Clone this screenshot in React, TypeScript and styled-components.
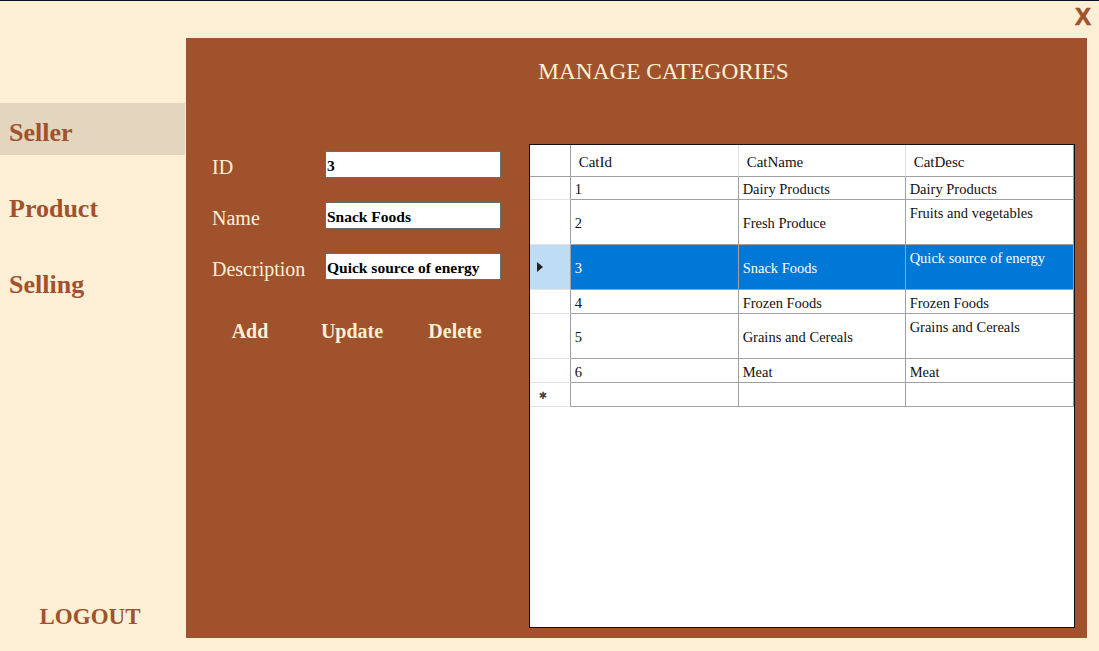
import React from "react";
import styled, { createGlobalStyle } from "styled-components";

const Global = createGlobalStyle`
  html, body { margin: 0; padding: 0; background: #FDEFD6; }
  body { font-family: "Liberation Serif", "Times New Roman", serif; }
  * { box-sizing: border-box; }
`;

const BROWN = "#A0522D";
const CREAM = "#FDEFD6";

const Page = styled.div`
  width: 1099px;
  height: 651px;
  border-top: 1px solid #0a1020;
  background: ${CREAM};
  display: flex;
  flex-direction: column;
  overflow: hidden;
`;

const TopBar = styled.div`
  height: 37px;
  display: flex;
  justify-content: flex-end;
  align-items: flex-start;
  padding-right: 8px;
`;

const CloseX = styled.div`
  font-family: "Liberation Sans", Arial, sans-serif;
  font-weight: 900;
  font-size: 24px;
  line-height: 24px;
  color: ${BROWN};
  margin-top: 4px;
  -webkit-text-stroke: 0.6px ${BROWN};
  cursor: pointer;
`;

const Body = styled.div`
  display: flex;
  height: 600px;
`;

const Sidebar = styled.nav`
  width: 186px;
  display: flex;
  flex-direction: column;
  padding-top: 65px;
  gap: 24px;
`;

const NavItem = styled.div<{ $active?: boolean }>`
  width: 185px;
  height: 52px;
  display: flex;
  align-items: center;
  padding-left: 9px;
  padding-top: 8px;
  font-weight: bold;
  font-size: 26px;
  color: ${BROWN};
  background: ${(p) => (p.$active ? "#E3D5BE" : "transparent")};
`;

const Logout = styled.div`
  margin-top: auto;
  margin-bottom: -2px;
  text-align: center;
  padding-right: 6px;
  font-weight: bold;
  font-size: 23px;
  color: ${BROWN};
  line-height: 26px;
  transform: translateY(-10px);
`;

const Panel = styled.main`
  width: 901px;
  height: 600px;
  background: ${BROWN};
  display: flex;
  flex-direction: column;
  padding: 0 12px 10px 0;
`;

const Title = styled.h1`
  margin: 0;
  height: 106px;
  padding-top: 20px;
  padding-left: 66px;
  text-align: center;
  font-weight: normal;
  font-size: 23.3px;
  line-height: 26px;
  color: ${CREAM};
`;

const Content = styled.div`
  flex: 1;
  display: flex;
`;

const Form = styled.div`
  width: 343px;
  padding: 7px 0 0 26px;
  display: flex;
  flex-direction: column;
  gap: 24px;
`;

const FieldRow = styled.div`
  display: flex;
  align-items: center;
  height: 27px;
`;

const Label = styled.label`
  width: 113px;
  font-size: 20px;
  color: ${CREAM};
  padding-top: 5px;
`;

const Input = styled.div`
  width: 176px;
  height: 27px;
  background: #fff;
  border: 1px solid #6b6b6b;
  display: flex;
  align-items: center;
  padding-left: 1px;
  padding-top: 2px;
  font-weight: bold;
  font-size: 15.5px;
  color: #000;
  white-space: nowrap;
  overflow: hidden;
`;

const Buttons = styled.div`
  display: grid;
  grid-template-columns: 76px 128px 78px;
  margin-top: 15px;
`;

const Btn = styled.div`
  text-align: center;
  font-weight: bold;
  font-size: 20px;
  color: ${CREAM};
  line-height: 24px;
`;

const GridBox = styled.div`
  width: 547px;
  height: 484px;
  border: 1px solid #111;
  background: #fff;
  display: flex;
  flex-direction: column;
`;

const Row = styled.div<{ $h: number }>`
  display: grid;
  grid-template-columns: 41px 168px 167px 168px;
  height: ${(p) => p.$h}px;
`;

const RowHead = styled.div<{ $sel?: boolean; $header?: boolean }>`
  border-right: 1px solid #A0A0A0;
  border-bottom: 1px solid ${(p) => (p.$header ? "#A0A0A0" : "#E4E4E4")};
  background: ${(p) => (p.$sel ? "#BEDCF3" : "#fff")};
  display: flex;
  align-items: center;
  padding-left: 7px;
`;

const HeadCell = styled.div<{ $last?: boolean }>`
  border-right: 1px solid ${(p) => (p.$last ? "#A0A0A0" : "#E0E0E0")};
  border-bottom: 1px solid #A0A0A0;
  display: flex;
  align-items: center;
  padding-left: 8px;
  padding-top: 3px;
  font-size: 15px;
  color: #111;
`;

const Cell = styled.div<{ $sel?: boolean; $top?: boolean }>`
  border-right: 1px solid #A0A0A0;
  border-bottom: 1px solid #A0A0A0;
  background: ${(p) => (p.$sel ? "#0078D7" : "#fff")};
  color: ${(p) => (p.$sel ? "#fff" : "#111")};
  display: flex;
  align-items: ${(p) => (p.$top ? "flex-start" : "center")};
  padding: ${(p) => (p.$top ? "5px 4px 0" : "3px 4px 0")};
  font-size: 14.5px;
  white-space: nowrap;
  overflow: hidden;
`;

const Star = styled.span`
  font-family: "DejaVu Sans", sans-serif;
  font-size: 10px;
  color: #444;
  padding-left: 2px;
  padding-top: 2px;
`;

type R = { id: string; name: string; desc: string; h: number; tall?: boolean; sel?: boolean };

const rows: R[] = [
  { id: "1", name: "Dairy Products", desc: "Dairy Products", h: 23 },
  { id: "2", name: "Fresh Produce", desc: "Fruits and vegetables", h: 45, tall: true },
  { id: "3", name: "Snack Foods", desc: "Quick source of energy", h: 45, tall: true, sel: true },
  { id: "4", name: "Frozen Foods", desc: "Frozen Foods", h: 24 },
  { id: "5", name: "Grains and Cereals", desc: "Grains and Cereals", h: 45, tall: true },
  { id: "6", name: "Meat", desc: "Meat", h: 24 },
];

export default function App() {
  return (
    <>
      <Global />
      <Page>
        <TopBar>
          <CloseX>X</CloseX>
        </TopBar>
        <Body>
          <Sidebar>
            <NavItem $active>Seller</NavItem>
            <NavItem>Product</NavItem>
            <NavItem>Selling</NavItem>
            <Logout>LOGOUT</Logout>
          </Sidebar>
          <Panel>
            <Title>MANAGE CATEGORIES</Title>
            <Content>
              <Form>
                <FieldRow>
                  <Label>ID</Label>
                  <Input>3</Input>
                </FieldRow>
                <FieldRow>
                  <Label>Name</Label>
                  <Input>Snack Foods</Input>
                </FieldRow>
                <FieldRow>
                  <Label>Description</Label>
                  <Input>Quick source of energy</Input>
                </FieldRow>
                <Buttons>
                  <Btn>Add</Btn>
                  <Btn>Update</Btn>
                  <Btn>Delete</Btn>
                </Buttons>
              </Form>
              <GridBox>
                <Row $h={32}>
                  <RowHead $header />
                  <HeadCell>CatId</HeadCell>
                  <HeadCell>CatName</HeadCell>
                  <HeadCell $last>CatDesc</HeadCell>
                </Row>
                {rows.map((r) => (
                  <Row key={r.id} $h={r.h}>
                    <RowHead $sel={r.sel}>
                      {r.sel && (
                        <svg width="6" height="10" viewBox="0 0 6 10">
                          <path d="M0 0 L6 5 L0 10 Z" fill="#222" />
                        </svg>
                      )}
                    </RowHead>
                    <Cell $sel={r.sel}>{r.id}</Cell>
                    <Cell $sel={r.sel}>{r.name}</Cell>
                    <Cell $sel={r.sel} $top={r.tall}>{r.desc}</Cell>
                  </Row>
                ))}
                <Row $h={24}>
                  <RowHead>
                    <Star>✱</Star>
                  </RowHead>
                  <Cell />
                  <Cell />
                  <Cell />
                </Row>
              </GridBox>
            </Content>
          </Panel>
        </Body>
      </Page>
    </>
  );
}
